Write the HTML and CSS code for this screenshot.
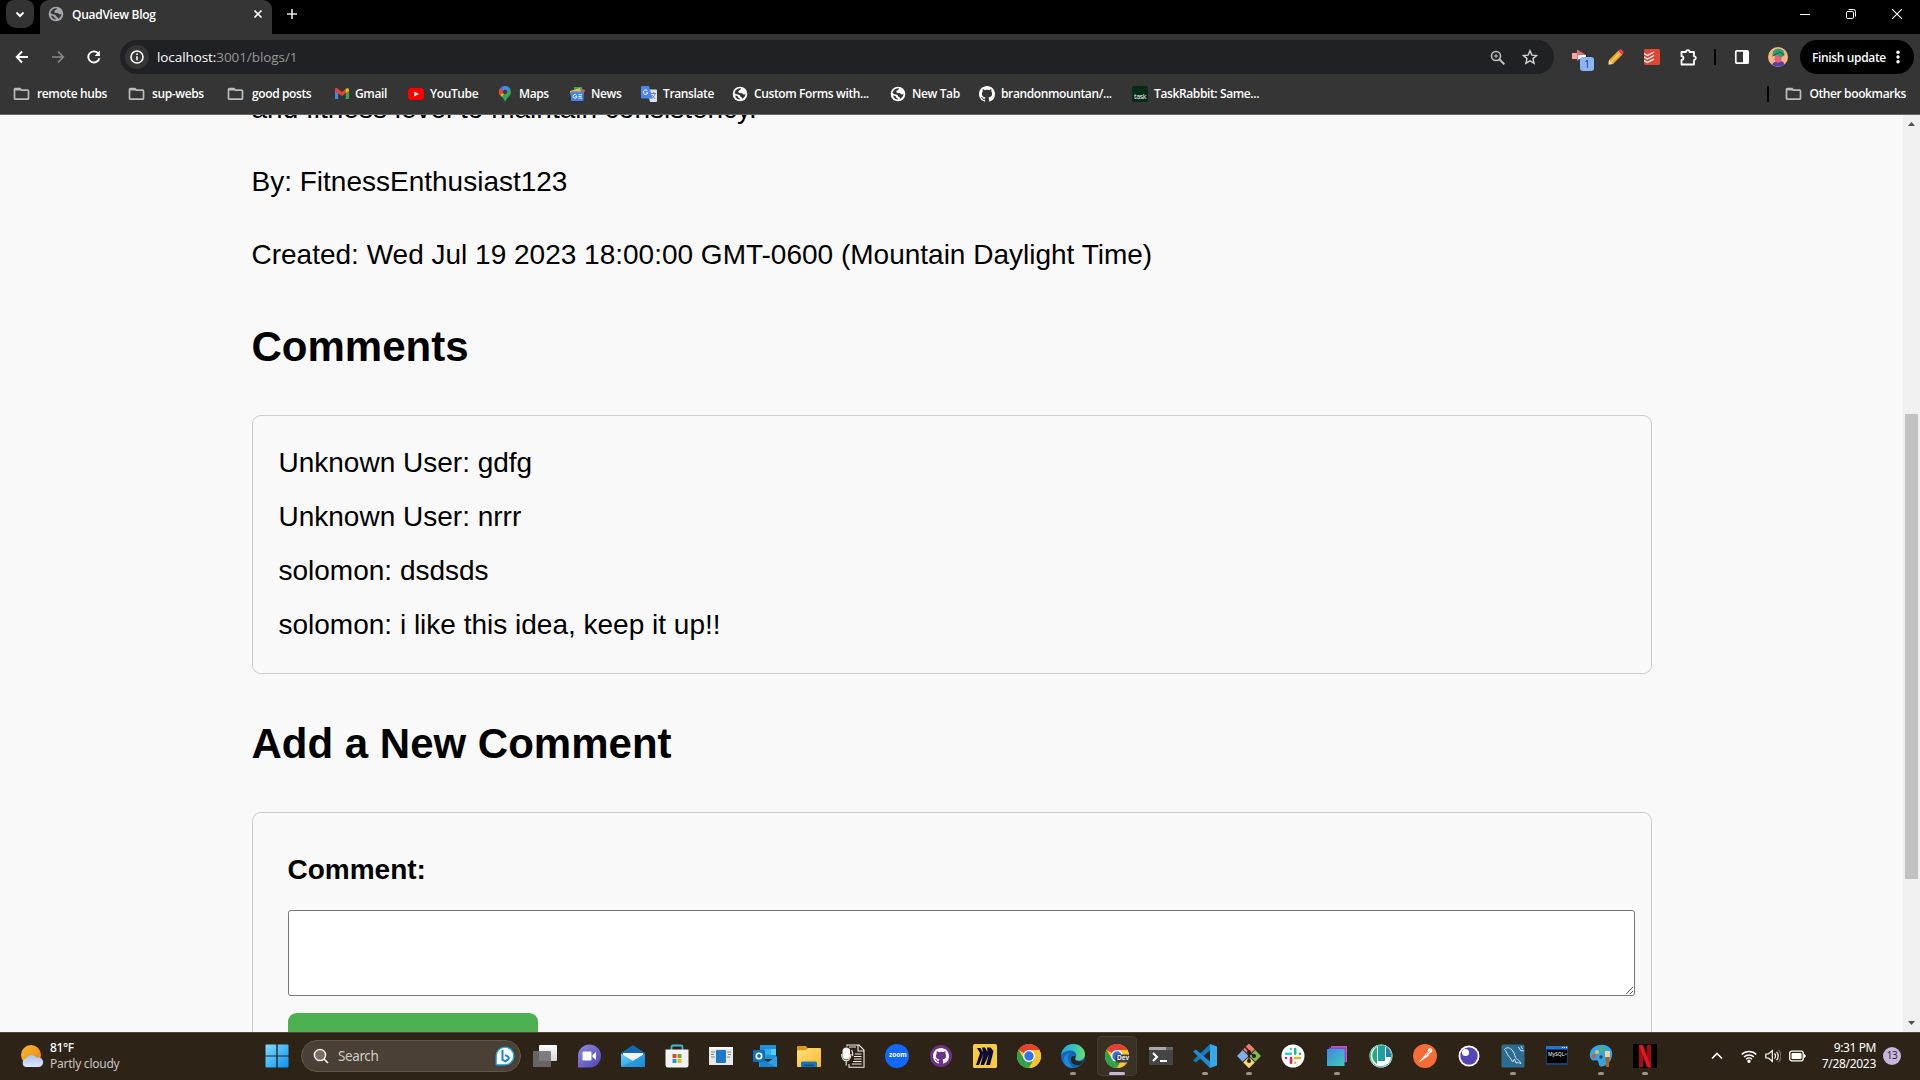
FILE: index.html
```html
<!DOCTYPE html>
<html lang="en">
<head>
<meta charset="utf-8">
<title>QuadView Blog</title>
<link rel="stylesheet" href="styles.css">
</head>
<body>
<svg class="defs" width="0" height="0" aria-hidden="true">
  <defs>
    <symbol id="globe" viewBox="0 0 16 16"><circle cx="8" cy="8" r="7.3" fill="currentColor"/><path class="land" d="M9.2 2.6C8.7 4.4 6.8 4 6.3 5.5 6 6.8 7.6 7 9 7.1c1.700.1 2 1.500 3.400 1.300.7-.1.8-.6 1.200-.8-.1 2.500-1.500 4.500-3.700 5.500.3-1 .1-1.700-.9-2-1.300-.4-.6-1.900-2-2.300C5.300 8.500 3.800 7.800 2.400 6.900 3 4.300 5 2.400 7.900 2.200zM3 9.600c1 .2 2.800.3 3 1.300.2.9.8 1.300 1.800 1.600l.2 1.100C5.700 13.700 3.700 12.100 3 9.600z"/></symbol>
    <symbol id="folder" viewBox="0 0 16 14"><path d="M1 3v8.200c0 .7.400 1 1 1h12c.6 0 1-.4 1-1V4.200c0-.7-.4-1-1-1H8L6.500 1.500H2c-.6 0-1 .4-1 1z" fill="none" stroke="#b9bbbd" stroke-width="1.700"/><path d="M1 1.500h5.500L8 3.500H1z" fill="#b9bbbd"/></symbol>
    <symbol id="octocat" viewBox="0 0 16 16"><path fill="currentColor" d="M8 0C3.580 0 0 3.580 0 8c0 3.540 2.290 6.530 5.470 7.590.4.070.55-.17.55-.38 0-.19-.01-.82-.01-1.490-2.010.37-2.530-.49-2.690-.94-.09-.23-.48-.94-.82-1.130-.28-.15-.68-.52-.01-.53.630-.01 1.080.58 1.230.82.720 1.210 1.870.87 2.330.66.070-.52.280-.87.510-1.070-1.780-.2-3.640-.89-3.640-3.950 0-.87.310-1.590.82-2.150-.08-.2-.36-1.020.08-2.120 0 0 .67-.21 2.200.82.640-.18 1.320-.27 2-.27s1.360.09 2 .27c1.530-1.040 2.200-.82 2.200-.82.440 1.100.16 1.920.08 2.120.510.560.82 1.270.82 2.150 0 3.070-1.870 3.750-3.650 3.950.290.250.54.730.54 1.480 0 1.070-.01 1.930-.01 2.200 0 .21.150.46.550.38A8.010 8.010 0 0 0 16 8c0-4.420-3.580-8-8-8z"/></symbol>
    <symbol id="chromeball" viewBox="0 0 24 24"><circle cx="12" cy="12" r="12" fill="#fbc52d"/><path d="M12 12 1.600 6A12 12 0 0 1 22.400 6z" fill="#e34133"/><path d="M1.600 6 6.800 15 12 24A12 12 0 0 1 1.600 6z" fill="#2da14c"/><path d="M6.800 15 12 24l5.200-9z" fill="#2da14c"/><path d="M17.200 15 12 24A12 12 0 0 0 22.400 6H12z" fill="#fbc52d"/><circle cx="12" cy="12" r="5.900" fill="#fff"/><circle cx="12" cy="12" r="4.700" fill="#2f74e8"/></symbol>
    <linearGradient id="win" x1="0" y1="0" x2="1" y2="1"><stop offset="0" stop-color="#7fdcff"/><stop offset="1" stop-color="#0a91f5"/></linearGradient>
    <linearGradient id="sun" x1="0" y1="0" x2="1" y2="1"><stop offset="0" stop-color="#f7bd2c"/><stop offset="1" stop-color="#ef7e18"/></linearGradient>
    <linearGradient id="cloud" x1="0" y1="0" x2="0" y2="1"><stop offset="0" stop-color="#a9c2ec"/><stop offset="1" stop-color="#dce8fb"/></linearGradient>
    <linearGradient id="teams" x1="0" y1="0" x2="1" y2="1"><stop offset="0" stop-color="#8f8bdc"/><stop offset="1" stop-color="#4d44b8"/></linearGradient>
    <linearGradient id="sky" x1="0" y1="0" x2="1" y2="1"><stop offset="0" stop-color="#6bd4fb"/><stop offset="1" stop-color="#1287d8"/></linearGradient>
    <linearGradient id="edgeg" x1="0" y1="0" x2="1" y2="0"><stop offset="0" stop-color="#2aa7dd"/><stop offset=".55" stop-color="#35c1c0"/><stop offset="1" stop-color="#6fe05c"/></linearGradient>
    <linearGradient id="fold" x1="0" y1="0" x2="1" y2="1"><stop offset="0" stop-color="#ffe07a"/><stop offset="1" stop-color="#f8b92c"/></linearGradient>
    <linearGradient id="box" x1="0" y1="0" x2="1" y2="1"><stop offset="0" stop-color="#3f86e8"/><stop offset="1" stop-color="#3fcdb4"/></linearGradient>
    <linearGradient id="gray" x1="0" y1="0" x2="0" y2="1"><stop offset="0" stop-color="#fff"/><stop offset="1" stop-color="#d6d6d6"/></linearGradient>
  </defs>
</svg>

<header class="browser">
  <div class="tabstrip">
    <button class="tab-search" aria-label="Search tabs"><svg width="10" height="7" viewBox="0 0 10 7"><path d="M1.500 1.500 5 5l3.500-3.500" fill="none" stroke="#fff" stroke-width="2"/></svg></button>
    <div class="tab">
      <svg class="favicon" width="16" height="16"><use href="#globe"/></svg>
      <span class="tab-title">QuadView Blog</span>
      <svg class="tab-close" width="10" height="10" viewBox="0 0 10 10"><path d="m1.500 1.500 7 7m0-7-7 7" stroke="#fff" stroke-width="1.700"/></svg>
    </div>
    <svg class="new-tab" width="10" height="10" viewBox="0 0 10 10"><path d="M5 0v10M0 5h10" stroke="#e8e8e8" stroke-width="1.600"/></svg>
    <div class="window-controls">
      <svg width="10" height="10" viewBox="0 0 10 10"><path d="M0 5.500h10" stroke="#fff"/></svg>
      <svg width="10" height="10" viewBox="0 0 10 10"><rect x=".5" y="2.500" width="7" height="7" rx="1.300" fill="none" stroke="#fff"/><path d="M2.500.5H7.500a2 2 0 0 1 2 2V7.500" fill="none" stroke="#fff"/></svg>
      <svg width="10" height="10" viewBox="0 0 10 10"><path d="m0 0 10 10M10 0 0 10" stroke="#fff" stroke-width="1.100"/></svg>
    </div>
  </div>

  <div class="toolbar">
    <div class="nav">
      <svg width="14" height="14" viewBox="0 0 14 14"><path d="M13 7H2M7 1.500 1.700 7 7 12.500" fill="none" stroke="#fff" stroke-width="1.900"/></svg>
      <svg width="14" height="14" viewBox="0 0 14 14"><path d="M1 7h11M7 1.500 12.300 7 7 12.500" fill="none" stroke="#88898b" stroke-width="1.700"/></svg>
      <svg width="14" height="14" viewBox="0 0 14 14"><path d="M12.400 8.200A5.600 5.600 0 1 1 11.200 3.300" fill="none" stroke="#fff" stroke-width="1.900"/><path d="M12.900.6V6H7.600z" fill="#fff"/></svg>
    </div>
    <div class="omnibox">
      <span class="site-info"><svg width="14" height="14" viewBox="0 0 14 14"><circle cx="7" cy="7" r="6" fill="none" stroke="#fff" stroke-width="1.600"/><path d="M7 6.200v4M7 3.600v1.500" stroke="#fff" stroke-width="1.600"/></svg></span>
      <span class="url">localhost:<span class="path">3001/blogs/1</span></span>
      <svg class="zoom-icon" width="15" height="15" viewBox="0 0 15 15" fill="none" stroke="#bfc1c4"><circle cx="6" cy="6" r="4.500" stroke-width="1.600"/><path d="m9.300 9.300 5 5" stroke-width="2"/><path d="M6 4v4M4 6h4" stroke-width="1.100"/></svg>
      <svg width="16" height="16" viewBox="0 0 16 16"><path d="m8 1.800 1.900 4.300 4.700.4-3.600 3.100 1.100 4.600L8 11.800l-4.100 2.400L5 9.600 1.400 6.500l4.700-.4z" fill="none" stroke="#d0d2d4" stroke-width="1.400"/></svg>
    </div>
    <div class="extensions">
      <span class="ext-badge"><svg width="16" height="16" viewBox="0 0 16 16"><path d="M0 4h5v6H0z" fill="#f7a8a6"/><path d="M5 .5 14 6l-9 6z" fill="#ef6b6a"/><path d="M6 6h8v4H6z" fill="#fff"/></svg><b>1</b></span>
      <svg width="16" height="16" viewBox="0 0 16 16"><path d="M1 11 10.500 1.500 14.500 5.500 5 15 .5 15.500z" fill="#f7a126"/><path d="m3 13 9.400-9.400" stroke="#ffd35e" stroke-width="1.500"/><path d="M10.200 1.800 12 .3c1-.7 4 2.300 3.700 3.400L14.200 5.600z" fill="#ee355c"/><path d="m1 11 4 4-4.500.5z" fill="#ffd9a0"/></svg>
      <svg width="16" height="16" viewBox="0 0 16 16"><rect width="16" height="16" rx="1.500" fill="#e14534"/><path d="m0 4.500 3.500 2L10 3M0 8l3.500 2L10 6.500M0 11.500l3.500 2L10 10" fill="none" stroke="#fff" stroke-width="1.400"/></svg>
      <svg width="17" height="17" viewBox="0 0 17 17"><path d="M1.500 3H6a1.800 1.800 0 0 1 3.600 0H14v4.300a1.800 1.800 0 0 1 0 3.600V15.500H1.500V11a1.900 1.900 0 0 0 0-3.800z" fill="none" stroke="#fff" stroke-width="1.800" stroke-linejoin="round"/></svg>
      <i class="divider"></i>
      <svg class="panel" width="16" height="16" viewBox="0 0 16 16"><rect x="1.800" y="1.800" width="12.400" height="12.400" rx="1" fill="none" stroke="#fff" stroke-width="1.700"/><path d="M9 2h5v12H9z" fill="#fff"/></svg>
      <svg class="avatar" width="20" height="20" viewBox="0 0 20 20"><circle cx="10" cy="10" r="10" fill="#f5b780"/><path d="M4 17.500C6 14 9 14 11 14.500c3-1 5 0 5.500 3A10 10 0 0 1 4 17.500z" fill="#5a3fae"/><path d="M7 8h7l-1 6.500-3.500 1.500L6.500 13z" fill="#e8607d"/><path d="M4.500 8C4.500 3 8 1.500 11 1.800c4 .3 5.500 3 5.500 6.700l-4 2-3-2.500-3 1z" fill="#2f9f70"/><path d="M4.500 9 12 5l4 3" fill="none" stroke="#15614e"/></svg>
    </div>
    <button class="update">Finish update<svg width="4" height="14" viewBox="0 0 4 14" fill="#fff"><circle cx="2" cy="2.300" r="1.700"/><circle cx="2" cy="7" r="1.700"/><circle cx="2" cy="11.700" r="1.700"/></svg></button>
  </div>

  <nav class="bookmarks">
    <a class="bm bm-hubs"><svg width="17" height="14"><use href="#folder"/></svg><span>remote hubs</span></a>
    <a class="bm bm-sup"><svg width="17" height="14"><use href="#folder"/></svg><span>sup-webs</span></a>
    <a class="bm bm-posts"><svg width="17" height="14"><use href="#folder"/></svg><span>good posts</span></a>
    <a class="bm bm-gmail"><svg width="14" height="12" viewBox="0 0 14 12"><path d="M0 2v9h3.200V4.500z" fill="#4285f4"/><path d="M14 2v9h-3.200V4.500z" fill="#34a853"/><path d="M0 2.500V1.500C0 0 1.500-.3 2.500.5L7 4 11 .8v4L7 8 0 3z" fill="#ea4335"/><path d="M10.800.8C12.300-.4 14 .2 14 1.800v1L10.800 5z" fill="#fbbc04"/></svg><span>Gmail</span></a>
    <a class="bm bm-yt"><svg width="16" height="12" viewBox="0 0 16 12"><rect width="16" height="12" rx="3.500" fill="#f00"/><path d="m6.300 3.500 4.500 2.500-4.500 2.500z" fill="#fff"/></svg><span>YouTube</span></a>
    <a class="bm bm-maps"><svg width="12" height="16" viewBox="0 0 12 16"><path d="M6 0a6 6 0 0 1 6 6c0 4-4 5-6 10-.7-2.500-2-4-3-5z" fill="#34a853"/><path d="M1.300 2.500 6 6 3 11C1.500 9.500 0 8 0 6c0-1.300.5-2.600 1.300-3.500z" fill="#fbbc04"/><path d="M0 6a6 6 0 0 1 1.500-4L6 6 1 9C.4 8 0 7 0 6z" fill="#ea4335"/><path d="M1.500 2A6 6 0 0 1 11 2.700L6 7z" fill="#4285f4"/><circle cx="6" cy="6" r="2.200" fill="#3b3b3b"/></svg><span>Maps</span></a>
    <a class="bm bm-news"><svg width="15" height="14" viewBox="0 0 15 14"><path d="M4 0h8v5H4z" fill="#34a853"/><path d="m0 4 10-3 1 4-10 4z" fill="#e6bd45"/><path d="m12 2 3 1-2 6-3-2z" fill="#e5544b"/><rect x="1" y="4.500" width="12.500" height="9.500" rx="1" fill="#4285f4"/><path d="M6.600 8.200a1.900 1.900 0 1 0 .3 1.500H5.200M8.500 7.700h3.500M8.500 9.500h3M8.500 11.200h3.500" fill="none" stroke="#fff" stroke-width=".9"/></svg><span>News</span></a>
    <a class="bm bm-tr"><svg width="16" height="16" viewBox="0 0 16 16"><path d="M6 3.500h9q1 0 1 1V15q0 1-1 1H9z" fill="#dde2ea"/><path d="M1 0h7l3.500 12.500H1q-1 0-1-1V1q0-1 1-1z" fill="#4b86ee"/><path d="M6.600 5a2.300 2.300 0 1 0 .2 1.900H5" fill="none" stroke="#fff"/><path d="M9.800 7.500H15M12.400 6v1.500M14 8c-.5 2-2 3.500-3.500 4M11 9l3 4" fill="none" stroke="#68788c" stroke-width=".9"/></svg><span>Translate</span></a>
    <a class="bm bm-forms"><svg width="16" height="16"><use href="#globe"/></svg><span>Custom Forms with...</span></a>
    <a class="bm bm-new"><svg width="16" height="16"><use href="#globe"/></svg><span>New Tab</span></a>
    <a class="bm bm-git"><svg width="16" height="16"><use href="#octocat"/></svg><span>brandonmountan/...</span></a>
    <a class="bm bm-task"><b class="task-icon">task</b><span>TaskRabbit: Same...</span></a>
    <i class="divider"></i>
    <a class="bm bm-other"><svg width="17" height="14"><use href="#folder"/></svg><span>Other bookmarks</span></a>
  </nav>
</header>

<div class="viewport">
  <main class="blog">
    <p>and fitness level to maintain consistency.</p>
    <p>By: FitnessEnthusiast123</p>
    <p>Created: Wed Jul 19 2023 18:00:00 GMT-0600 (Mountain Daylight Time)</p>
    <h2>Comments</h2>
    <ul class="comments">
      <li>Unknown User: gdfg</li>
      <li>Unknown User: nrrr</li>
      <li>solomon: dsdsds</li>
      <li>solomon: i like this idea, keep it up!!</li>
    </ul>
    <h2>Add a New Comment</h2>
    <form class="comment-form">
      <label for="comment">Comment:</label>
      <textarea id="comment"></textarea>
      <div class="submit"></div>
    </form>
  </main>
  <div class="scrollbar">
    <svg width="7" height="4" viewBox="0 0 7 4"><path d="M3.500 0 7 4H0z" fill="#505050"/></svg>
    <div class="thumb"></div>
    <svg width="7" height="4" viewBox="0 0 7 4"><path d="M3.500 4 7 0H0z" fill="#505050"/></svg>
  </div>
</div>

<footer class="taskbar">
  <div class="weather">
    <svg width="24" height="24" viewBox="0 0 24 24"><circle cx="11" cy="11" r="10" fill="url(#sun)"/><path d="M6.500 23a4.300 4.300 0 0 1-.3-8.500 6 6 0 0 1 10.500-.8A4.800 4.800 0 1 1 18 23z" fill="url(#cloud)"/></svg>
    <div class="weather-text"><span class="temp">81°F</span><span class="sky">Partly cloudy</span></div>
  </div>
  <svg class="start" width="24" height="24" viewBox="0 0 24 24"><path d="M1.500.5H11.300v11H.5v-10q0-1 1-1zM12.700.5h9.800q1 0 1 1v10H12.700zM.5 12.500h10.800v11H1.500q-1 0-1-1zM12.700 12.500h10.800v10q0 1-1 1h-9.800z" fill="url(#win)"/></svg>
  <div class="search">
    <svg width="16" height="16" viewBox="0 0 16 16"><circle cx="7" cy="7" r="5.600" fill="#756c62" stroke="#f1efed" stroke-width="1.500"/><path d="m11 11 4 4" stroke="#f1efed" stroke-width="1.700"/></svg>
    <span>Search</span>
    <svg width="20" height="20" viewBox="0 0 20 20"><path d="M1.200 18.800V10A8.800 8.800 0 1 1 10 18.800z" fill="#fff" stroke="#1ca7df" stroke-width="1.300"/><path d="M7.500 4v9.800l3 1.500 3-2.200c.8-1.800-.3-3-3.500-4" fill="none" stroke="#1687d5" stroke-width="2"/></svg>
  </div>
  <div class="apps">
    <span class="app"><svg viewBox="0 0 24 24"><rect x="6" y="1" width="18" height="16" rx="1" fill="url(#gray)"/><rect x="0" y="7" width="18" height="16" rx="1" fill="#707070" fill-opacity=".88"/></svg></span>
    <span class="app"><svg viewBox="0 0 24 24"><path d="M1 23.500V12A11.500 11.500 0 1 1 12.500 23.500z" fill="url(#teams)"/><rect x="5.500" y="7.500" width="9" height="9" rx="1.300" fill="#fff"/><path d="m15.500 11 3.500-3v8l-3.500-3z" fill="#fff"/></svg></span>
    <span class="app"><svg viewBox="0 0 24 24"><path d="M0 9 12 1l12 8v3H0z" fill="#1267b4"/><path d="M2 9h20v8H2z" fill="#f3f3f3"/><path d="M0 9.500 12 17l12-7.500V22q0 1-1 1H1q-1 0-1-1z" fill="url(#sky)"/><path d="m0 22.500 12-5.500L24 9.500V22q0 1-1 1H1z" fill="#168fdc" fill-opacity=".55"/></svg></span>
    <span class="app"><svg viewBox="0 0 24 24"><path d="M6.500 7V3q0-1.500 1.500-1.500h8q1.500 0 1.500 1.500v4" fill="none" stroke="#3fb9df" stroke-width="1.800"/><path d="M.5 5.500h23V21q0 2.500-2.500 2.500H3Q.5 23.500.5 21z" fill="#f3f3f3"/><path d="M7.500 10h4v4h-4z" fill="#dd4a22"/><path d="M12.500 10h4v4h-4z" fill="#70a625"/><path d="M7.500 15h4v4h-4z" fill="#1aa0dc"/><path d="M12.500 15h4v4h-4z" fill="#f4b61c"/></svg></span>
    <span class="app"><svg viewBox="0 0 24 24"><path d="M0 3h24v18H0z" fill="#e9e9e9"/><path d="M0 3h24v2H0z" fill="#fff"/><path d="M2 8h4M2 10.500h3M2 13h4M18 8h4M19 10.500h3M18 13h3" stroke="#888"/><rect x="7" y="6" width="10" height="13" rx="1" fill="#1c79cd"/></svg></span>
    <span class="app"><svg viewBox="0 0 24 24"><path d="M7 1h16v14H7z" fill="#2192da"/><path d="M12 5h6v6h-6z" fill="#32b0ef"/><path d="M18 5h5v6h-5z" fill="#54cef6"/><path d="M6 14l9 4 9-6v11H6z" fill="#2b9fe5"/><path d="m6 14 17 9H7z" fill="#1687d5"/><rect x="0" y="6" width="12" height="12" rx="1" fill="#0f6fbe"/><circle cx="6" cy="12" r="2.700" fill="none" stroke="#fff" stroke-width="1.600"/></svg></span>
    <span class="app"><svg viewBox="0 0 24 24"><path d="M0 3q0-1 1-1h8l2 2.500V8H0z" fill="#d99a18"/><path d="M0 6.500 9 6l2-2h12q1 0 1 1v17q0 1-1 1H1q-1 0-1-1z" fill="url(#fold)"/><path d="M4 23v-4q0-1.500 1.500-1.500h13Q20 17.500 20 19v4z" fill="#1475b8"/><path d="M7 20.500h10v1.500H7z" fill="#0b4f85"/></svg></span>
    <span class="app"><svg viewBox="0 0 24 24" fill="none" stroke="#f4f0e8" stroke-width="1.100"><path d="M6 2.500V1h12l5 5v17.300H8V20M17 1v6h6"/><path d="M14 10h6.500M13 12.500h7.500M13 15h7.500M12 17.500h8.500M11 20h9.500M8 3h7"/><rect x="2" y="4" width="6.500" height="11" rx="3.200" fill="#fff"/><path d="M.6 10c0 9 9.300 9 9.300 0M5.200 17v4.500M10.500 6q2 3 1 6"/></svg></span>
    <span class="app"><svg viewBox="0 0 24 24"><circle cx="12" cy="12" r="12" fill="#1467fb"/></svg><em class="zoom-word">zoom</em></span>
    <span class="app"><svg viewBox="0 0 24 24"><circle cx="12" cy="12" r="11" fill="#6e3187"/><svg x="4" y="4" width="16" height="16" class="white"><use href="#octocat"/></svg></svg></span>
    <span class="app"><svg viewBox="0 0 24 24"><rect width="24" height="24" rx="1.500" fill="#f8cc3c"/><path d="M4 4h3.500L10 8.500 9 3.500h3L14.500 8 14 3.500h3.500L20.500 7l-3.500 14h-4l3-11-5 11H7.500L10.500 9.500 6 21H3L7 9z" fill="#0b0839"/></svg></span>
    <span class="app"><svg viewBox="0 0 24 24"><use href="#chromeball"/></svg></span>
    <span class="app running"><svg viewBox="0 0 24 24"><circle cx="12" cy="12" r="12" fill="#1565b9"/><path d="M0 11.500C1 4.500 6 0 12 0c7 0 12 5 12 10 0 4-3 6.500-6.500 6.500-2.500 0-3.500-1-3.500-2 0-1 1.300-1.600 1.300-3.300C15.300 8.500 12.500 6.500 9 6.500 4.500 6.500 1.200 9 0 11.500z" fill="url(#edgeg)"/><path d="M8.500 9c-3 4-1.500 11 4 14.700-4 .8-8-1.700-9.500-4.700C1 14.500 4.500 9.500 8.500 9z" fill="#1a8ad4"/><path d="M14 14.500c0 3 5 4 9 1.700-1 2-2.500 3.800-4.200 5-6 1-9.800-3.200-8.800-7.200.5-1.500 1.800-2 3-2 1.500 0 2.200 1 1 2.500z" fill="#2c2318"/></svg></span>
    <span class="app running active"><svg viewBox="0 0 24 24"><use href="#chromeball"/><rect x="10.500" y="10.500" width="13.500" height="8" rx="1" fill="#3c3f43"/></svg><em class="dev-word">Dev</em></span>
    <span class="app"><svg viewBox="0 0 24 24"><rect y="3" width="24" height="18" rx="1" fill="#454545"/><path d="M0 4q0-1 1-1h22q1 0 1 1v2H0z" fill="#a9a9a9"/><path d="M17 3h7v3h-7z" fill="#666"/><path d="m4 9 4 4-4 4M11 17h7" fill="none" stroke="#fff" stroke-width="2"/></svg></span>
    <span class="app running"><svg viewBox="0 0 24 24"><path d="M17 0 17.500 6 3 18.500 0 16.500z" fill="#1678bd"/><path d="M3 5.500 17.500 18 17 24 0 7.500z" fill="#1d8bd6"/><path d="m17 0 7 2.500v19L17 24z" fill="#35a8ee"/></svg></span>
    <span class="app running"><svg viewBox="0 0 24 24"><path d="m12-.5 5.800 5.800L12 11 6.200 5.300z" fill="#ee7a72"/><path d="m5.700 6 5.800 5.900-5.800 5.800L0 11.900z" fill="#82aee9"/><path d="m18.300 6 5.700 5.900-5.700 5.800-5.800-5.800z" fill="#7dbb4f"/><path d="m12 12.700 5.800 5.800L12 24.300l-5.800-5.800z" fill="#f5d872"/><path d="m8 3 4 4v10M12 8l5 4" stroke="#251b12" stroke-width="1.400" fill="none"/><circle cx="12" cy="8" r="2" fill="#251b12"/><circle cx="17" cy="12" r="2" fill="#251b12"/><circle cx="12" cy="17" r="2" fill="#251b12"/></svg></span>
    <span class="app"><svg viewBox="0 0 24 24"><circle cx="12" cy="12" r="11.500" fill="#fff"/><g fill="none" stroke-width="2.600" stroke-linecap="round"><path d="M10 9.800H5M10 5v.1" stroke="#36c5f0"/><path d="M14.200 5v4.800M19 9.800h-.1" stroke="#2eb67d"/><path d="M14.200 14H19M14.200 18.800v-.1" stroke="#ecb22e"/><path d="M10 18.800V14M5 14h.1" stroke="#e01e5a"/></g></svg></span>
    <span class="app running"><svg viewBox="0 0 24 24"><path d="M6 2h16v16H6z" fill="#e24ab0"/><path d="M4 3.500h17v15H4z" fill="#7d4fd9"/><rect x="2" y="5" width="17.500" height="17" fill="url(#box)"/></svg></span>
    <span class="app"><svg viewBox="0 0 24 24"><circle cx="12" cy="12" r="11.500" fill="#fff"/><path d="M8 3v17A10 10 0 0 1 8 3z" fill="#26aa7a"/><path d="M9 2h7v15H9z" fill="#1ba2a6"/><path d="M17 3a10 10 0 0 1 5 10h-5z" fill="#257fa6"/><circle cx="12" cy="12" r="10.800" fill="none" stroke="#37b695"/></svg></span>
    <span class="app"><svg viewBox="0 0 24 24"><circle cx="12" cy="12" r="12" fill="#f76b37"/><path d="m5 19 8-9 3 1.500L5 19z" fill="#fff"/><path d="m12 11 3.500-4 2 1.500-3 4z" fill="#fff"/><circle cx="17" cy="6.500" r="2.300" fill="#fff"/><path d="m12.500 11.500 5-5" stroke="#f76b37" stroke-width=".7"/></svg></span>
    <span class="app"><svg viewBox="0 0 24 24"><circle cx="12" cy="12" r="10.500" fill="#fff"/><circle cx="12" cy="12" r="8.700" fill="#5646b5"/><circle cx="8.500" cy="8.500" r="3.500" fill="#fff"/></svg></span>
    <span class="app running"><svg viewBox="0 0 24 24"><rect x=".5" y=".5" width="23" height="23" rx="1.500" fill="#2d6c93"/><path d="M3.500 5.500C5.500 3 8 3.500 10 5c3 2.500 3.500 5.500 4.500 8.500 1 2 3.500 2 5.500 6-2-1-3.500-1-5-.5L13.500 15l-2 3C10 14 8 13 6.500 10.500 5.500 8.500 5 6.500 3.500 5.500zM17.500 3l2 3.500L23 7M20 2l1.500 3" fill="none" stroke="#dbe9f1" stroke-width="1"/></svg></span>
    <span class="app"><svg viewBox="0 0 24 24"><path d="M1 2h22v19H1z" fill="#163f78"/><path d="M2 6h20v13H2z" fill="#000"/><path d="M1 2h22v3H1z" fill="#2b73c7"/><path d="M17 3.500h5" stroke="#fff" stroke-dasharray="1 1"/></svg><em class="sql-word">MySQL&gt;</em></span>
    <span class="app running"><svg viewBox="0 0 24 24"><path d="M1 9C2 3 9 0 15 1c6 .8 9 5.500 8 11-.8 5-5 10-10 10.500-3 .3-3-2-3.500-4-.5-2.500-2-2.500-4-2C2.500 17 .2 13.500 1 9z" fill="#33a5e4"/><circle cx="8" cy="8" r="2" fill="#f2c53a"/><circle cx="13" cy="5" r="2" fill="#66b548"/><circle cx="5" cy="12" r="2" fill="#d75341"/><circle cx="12" cy="13" r="1.700" fill="#164e78"/><path d="M16 7h5v6h-5z" fill="#f1d69a"/><path d="M16.500 13h4L20 23h-3z" fill="#a85f24"/></svg></span>
    <span class="app running"><svg viewBox="0 0 24 24"><path d="M0 0h24v24H0z"/><path d="M6 1h4v22l-4 .8zM14 1h4v22.800l-4-.8z" fill="#a70b15"/><path d="M6 1h4l8 22.800-4-.8z" fill="#e51620"/></svg></span>
  </div>
  <div class="tray">
    <svg width="12" height="8" viewBox="0 0 12 8"><path d="m1 6.500 5-5 5 5" fill="none" stroke="#fff" stroke-width="1.700"/></svg>
    <svg width="16" height="13" viewBox="0 0 16 13" fill="none" stroke="#fff" stroke-width="1.400"><path d="M.7 4.500a10.500 10.500 0 0 1 14.600 0M3 7a7.200 7.200 0 0 1 10 0M5.200 9.200a4 4 0 0 1 5.600 0"/><circle cx="8" cy="11.200" r="1" fill="#fff"/></svg>
    <svg width="16" height="14" viewBox="0 0 16 14" fill="none" stroke="#fff" stroke-width="1.200"><path d="M.8 5v4h2.700L7.300 12.500v-11L3.500 5z"/><path d="M9.500 4.500a3.500 3.500 0 0 1 0 5M11.500 2.800a6 6 0 0 1 0 8.400"/><path d="M13.500 1a8.500 8.500 0 0 1 0 12" stroke="#776d62"/></svg>
    <svg width="17" height="12" viewBox="0 0 17 12"><rect x=".7" y="1.200" width="13.500" height="9.600" rx="2" fill="none" stroke="#fff" stroke-width="1.300"/><rect x="2.500" y="3" width="10" height="6" rx=".8" fill="#fff"/><path d="M15 4.500q1.300.2 1.300 1.500T15 7.500" fill="#fff" stroke="#fff"/></svg>
    <div class="clock"><span class="time">9:31 PM</span><span class="date">7/28/2023</span></div>
    <span class="count">13</span>
  </div>
</footer>
</body>
</html>
```
FILE: styles.css
```css
* { box-sizing: border-box; }
body {
  margin: 0;
  width: 1920px;
  height: 1080px;
  overflow: hidden;
  display: flex;
  flex-direction: column;
  background: #000;
  font-family: "Open Sans", "Noto Sans", sans-serif;
  font-size: 12px;
  color: #fff;
}
svg { display: block; flex: none; }
button { border: 0; padding: 0; font: inherit; color: inherit; }
.defs { position: absolute; }

/* Browser frame */
.browser { flex: none; height: 115px; border-bottom: 1px solid #68686a; background: #353535; }
.tabstrip { display: flex; align-items: flex-start; height: 34px; background: #000; }
.tab-search { display: grid; place-items: center; width: 28px; height: 28px; margin: 0 6px; background: #333; border-radius: 8px 8px 10px 10px; }
.tab { display: flex; align-items: center; width: 232px; height: 34px; padding: 0 9px 6px 8px; background: #353535; border-radius: 9px 9px 0 0; }
.tab-title { margin-left: 8px; font-weight: 600; font-size: 12px; letter-spacing: -.28px; }
.tab-close { margin-left: auto; }
.favicon { color: #a5a9ad; }
.land { fill: #353535; }
.new-tab { margin: 9px 0 0 15px; }
.window-controls { display: flex; gap: 36px; margin: 9px 18px 0 auto; }

.toolbar { display: flex; align-items: center; height: 40px; padding: 6px 6px 0 15px; background: #353535; }
.nav { display: flex; gap: 22px; width: 105px; }
.omnibox { display: flex; align-items: center; width: 1434px; height: 34px; padding: 0 16px 0 5px; border-radius: 17px; background: #202124; }
.site-info { display: grid; place-items: center; width: 24px; height: 24px; border-radius: 50%; background: #353535; }
.url { margin-left: 8px; font-size: 13.500px; letter-spacing: -.08px; }
.path { color: #96989b; }
.zoom-icon { margin-left: auto; margin-right: 17px; }
.extensions { display: flex; align-items: center; gap: 20px; margin-left: 18px; }
.ext-badge { position: relative; }
.ext-badge b { position: absolute; left: 8px; top: 8px; width: 14px; height: 14px; border-radius: 3px; background: #8ab4f8; color: #27364d; font: 10px/14px "Open Sans", sans-serif; text-align: center; }
.divider { width: 2px; height: 16px; background: #050505; }
.extensions .divider { margin: 0 -3px; }
.panel { margin-left: 1px; }
.avatar { margin-left: -2px; }
.update { display: flex; align-items: center; justify-content: space-between; width: 114px; height: 34px; margin-left: auto; padding: 0 14px 0 12px; border-radius: 17px; background: #000; font-weight: 600; letter-spacing: -.35px; }

.bookmarks { display: flex; align-items: center; height: 40px; padding: 0 14px 0 13px; }
.bm { display: flex; align-items: center; gap: 7px; flex: none; font-weight: 600; font-size: 12px; letter-spacing: -.38px; white-space: nowrap; }
.bm span { padding-bottom: 1px; }
.bm-hubs { width: 115px; }
.bm-sup { width: 99px; }
.bm-posts { width: 108px; gap: 8px; }
.bm-gmail { width: 73px; gap: 6px; }
.bm-yt { width: 91px; gap: 6px; }
.bm-maps { width: 71px; gap: 8px; }
.bm-news { width: 71px; gap: 6px; }
.bm-tr { width: 91px; gap: 6px; }
.bm-forms { width: 158px; gap: 6px; }
.bm-new { width: 89px; gap: 6px; }
.bm-git { width: 153px; gap: 6px; }
.bm-task { gap: 6px; }
.bm-other { margin-left: 16px; }
.bookmarks .divider { margin-left: auto; }
.task-icon { display: flex; align-items: flex-end; justify-content: center; width: 16px; height: 16px; padding-bottom: 1px; border-radius: 2px; background: #082b17; font-size: 7px; line-height: 8px; font-weight: 400; }

/* Blog page */
.viewport { display: flex; flex: 1; min-height: 0; overflow: hidden; background: #f9f9f9; }
.blog { flex: 1; margin: -28px 251.5px 0; color: #000; font-family: Arial, "Liberation Sans", sans-serif; font-size: 28px; line-height: 44.8px; }
.blog p { margin: 0 0 28px; }
.blog h2 { margin: 35.4px 0 35px; font-size: 42px; line-height: 67.2px; }
.comments { height: 259.5px; margin: 0; padding: 25.5px 26px 0; border: 1px solid #ccc; border-radius: 8.75px; list-style: none; }
.comments li { margin-bottom: 8.95px; }
.comment-form { display: flex; flex-direction: column; align-items: flex-start; height: 400px; padding: 35px 16px 34px 35px; border: 1px solid #ccc; border-radius: 8.75px; }
.comment-form label { font-weight: bold; }
.comment-form textarea { display: block; flex: none; width: 100%; height: 86px; margin: 17px 0; border: 1px solid #767676; border-radius: 3px; background: #fff; resize: vertical; }
.submit { flex: none; width: 250px; height: 70px; border-radius: 8.75px; background: #4caf50; }
.scrollbar { display: flex; flex-direction: column; align-items: center; width: 17px; padding: 7px 0; background: #f0f0f0; }
.thumb { width: 13px; height: 465px; margin: 288px 0 auto; background: #c1c1c1; }

/* Taskbar */
.taskbar { display: flex; align-items: center; flex: none; height: 48px; padding-bottom: 1px; border-top: 1px solid #50483d; background: #2e2317; font-family: "Noto Sans", "Open Sans", sans-serif; }
.weather { display: flex; align-items: center; gap: 6px; width: 264px; padding-left: 20px; }
.weather-text { display: flex; flex-direction: column; font-size: 12px; line-height: 16px; letter-spacing: -.25px; }
.temp { font-weight: 500; letter-spacing: -.35px; }
.sky { color: #c9c5c0; }
.start { margin: 0 -.5px 0 .5px; }
.search { display: flex; align-items: center; width: 220px; height: 32px; margin-left: 13px; padding: 0 5px 0 11px; border: 1px solid #61574a; border-radius: 16px; background: #4a4035; }
.search span { margin: 0 auto 0 9px; font-size: 13.500px; letter-spacing: -.4px; color: #d0ccc7; }
.apps { display: flex; margin-left: 2px; }
.app { position: relative; display: grid; place-items: center; width: 44px; height: 40px; }
.app > svg { width: 24px; height: 24px; }
.app em { position: absolute; font-style: normal; color: #fff; line-height: 8px; }
.white { color: #fff; }
.zoom-word { left: 14px; top: 15px; font-size: 6.500px; font-weight: 700; }
.dev-word { left: 22px; top: 18px; font-size: 6.500px; font-weight: 600; }
.sql-word { left: 13px; top: 14px; font-size: 5px; }
.active { width: 40px; margin: 0 2px; background: #3a3024; box-shadow: inset 0 0 0 1px #473d31; border-radius: 5px; }
.active .dev-word { left: 20px; }
.running::after { content: ""; position: absolute; left: 19px; bottom: 1px; width: 6px; height: 3px; border-radius: 2px; background: #9d958b; }
.active::after { left: 12px; width: 16px; background: #c8b6dd; }
.tray { display: flex; align-items: center; flex: 1; padding: 0 19px 0 44px; }
.tray > svg:nth-child(2) { margin-left: 18px; }
.tray > svg:nth-child(3) { margin-left: 8px; }
.tray > svg:nth-child(4) { margin-left: 8px; }
.clock { display: flex; flex-direction: column; align-items: flex-end; margin-left: auto; font-size: 12px; line-height: 16px; letter-spacing: -.3px; }
.time { letter-spacing: -.4px; }
.count { width: 18px; height: 18px; margin-left: 7px; border-radius: 50%; background: #c8b6dd; color: #2b2334; font-size: 10px; line-height: 17px; text-align: center; letter-spacing: -.4px; }
```
